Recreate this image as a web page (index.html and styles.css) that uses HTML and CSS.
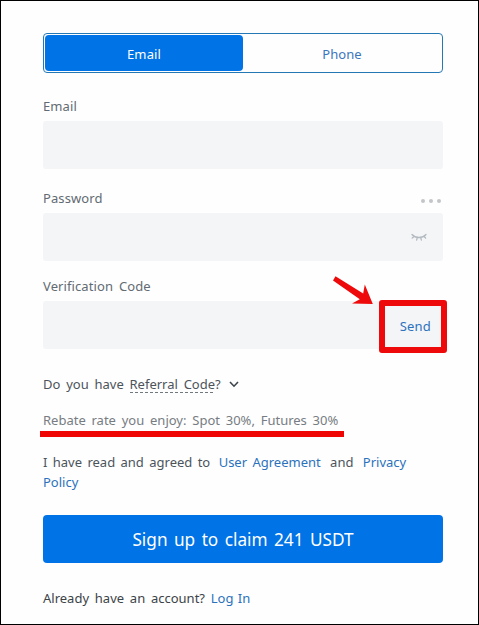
FILE: index.html
```html
<!DOCTYPE html>
<html lang="en">
<head>
    <meta charset="UTF-8">
    <meta name="viewport" content="width=device-width, initial-scale=1.0">
    <title>Sign Up</title>
    <link rel="stylesheet" href="styles.css">
</head>
<body>
    <form class="signup">
        <!-- Email / phone switch -->
        <div class="tabs">
            <button type="button" class="tab active">Email</button>
            <button type="button" class="tab">Phone</button>
        </div>

        <div class="field field-email">
            <label for="email">Email</label>
            <input type="text" id="email">
        </div>

        <div class="field field-password">
            <div class="label-row">
                <label for="password">Password</label>
                <span class="dots"><i></i><i></i><i></i></span>
            </div>
            <div class="input-box">
                <input type="password" id="password">
                <svg class="eye" width="16" height="10" viewBox="0 0 16 10" fill="none" stroke="#b3bac0" stroke-width="1.3" stroke-linecap="round">
                    <path d="M1 1.5C4.5 5.5 11.5 5.5 15 1.5M3.4 3.3L1.2 5M6.3 4.6L5.6 7.2M9.7 4.6L10.4 7.2M12.8 3.3L14.6 5"/>
                </svg>
            </div>
        </div>

        <div class="field field-code">
            <label for="code">Verification Code</label>
            <div class="input-box">
                <input type="text" id="code">
                <a class="send">Send</a>
                <span class="highlight"></span>
                <svg class="arrow" width="42" height="32" viewBox="0 0 42 32">
                    <path fill="#ee0a0a" d="M4.5 1.2L32.2 18.6L33.8 9.5L41.8 29L21 28.6L28.8 24.2L2 5.6Z"/>
                </svg>
            </div>
        </div>

        <div class="referral">
            <span>Do you have <span class="dashed">Referral Code</span>?</span>
            <svg class="chevron" width="10" height="7" viewBox="0 0 10 7" fill="none" stroke="#3c444b" stroke-width="1.6">
                <path d="M1 1L5 5.2L9 1"/>
            </svg>
        </div>

        <div class="rebate">Rebate rate you enjoy: Spot 30%, Futures 30%</div>
        <div class="underline"></div>

        <p class="agree">I have read and agreed to <a class="link-agree">User Agreement</a> and <a class="link-privacy">Privacy<br>Policy</a></p>

        <button type="button" class="submit">Sign up to claim 241 USDT</button>

        <p class="login">Already have an account? <a class="link-login">Log In</a></p>
    </form>
</body>
</html>
```

FILE: styles.css
```css
* {
    box-sizing: border-box;
}

body {
    margin: 0;
    height: 625px;
    border: 1px solid #000;
    background: #fefefe;
    font-family: "Noto Sans", "Open Sans", sans-serif;
    font-size: 13px;
    font-weight: 400;
    line-height: 20px;
    word-spacing: 2.4px;
    color: #4c545b;
    overflow: hidden;
}

.signup {
    width: 400px;
    margin: 32px 0 0 42px;
}

button {
    border: none;
    padding: 0;
    background: none;
    font: inherit;
    word-spacing: inherit;
}

a {
    color: #2b72bd;
}

/* Switch */
.tabs {
    display: flex;
    height: 40px;
    padding: 1px;
    border: 1px solid #2478b4;
    border-radius: 4px;
}

.tab {
    flex: 1;
    padding-top: 1px;
    color: #3b76bd;
    letter-spacing: 0.1px;
}

.tab.active {
    background: #0073e6;
    border-radius: 4px;
    color: #fff;
}

/* Fields */
.field {
    color: #626b72;
}

.field-email {
    margin-top: 23px;
}

.field-password {
    margin-top: 19px;
}

.field-code {
    margin-top: 15px;
}

.field label {
    display: block;
    height: 25px;
    letter-spacing: 0.1px;
}

.field input {
    display: block;
    width: 100%;
    height: 48px;
    border: none;
    border-radius: 3px;
    background: #f4f5f7;
    outline: none;
}

.label-row {
    display: flex;
    justify-content: space-between;
}

.dots {
    display: flex;
    gap: 4px;
    padding: 11px 2px 0 0;
}

.dots i {
    width: 4px;
    height: 4px;
    border-radius: 50%;
    background: #c3c6c9;
}

.input-box {
    position: relative;
}

.eye {
    position: absolute;
    right: 16px;
    top: 20px;
}

.send {
    position: absolute;
    right: 12px;
    top: 15px;
    letter-spacing: 0.2px;
}

/* Red markers */
.highlight {
    position: absolute;
    left: 336px;
    top: -1px;
    width: 68px;
    height: 53px;
    border: 6px solid #ee0a0a;
    border-radius: 3px;
}

.arrow {
    position: absolute;
    left: 288px;
    top: -26px;
}

.underline {
    width: 304px;
    height: 6px;
    margin: 1px 0 0 -3px;
    background: #f00505;
}

.referral {
    display: flex;
    align-items: center;
    gap: 8px;
    margin-top: 25px;
}

.dashed {
    background: repeating-linear-gradient(to right, #70777d 0 3px, transparent 3px 5px) bottom / 100% 1px no-repeat;
}

.rebate {
    margin-top: 16px;
    color: #777c82;
}

.agree {
    margin: 15px 0 0;
    word-spacing: 2px;
}

.link-agree {
    margin: 0 4px 0 3px;
}

.link-privacy {
    margin-left: 4px;
}

.submit {
    display: block;
    width: 100%;
    height: 48px;
    margin-top: 23px;
    padding-top: 2px;
    border-radius: 4px;
    background: #0073e6;
    color: #fff;
    font-size: 17.2px;
    word-spacing: 2px;
}

.login {
    margin: 25px 0 0;
    color: #3c4348;
}

.link-login {
    word-spacing: 1px;
}
```
